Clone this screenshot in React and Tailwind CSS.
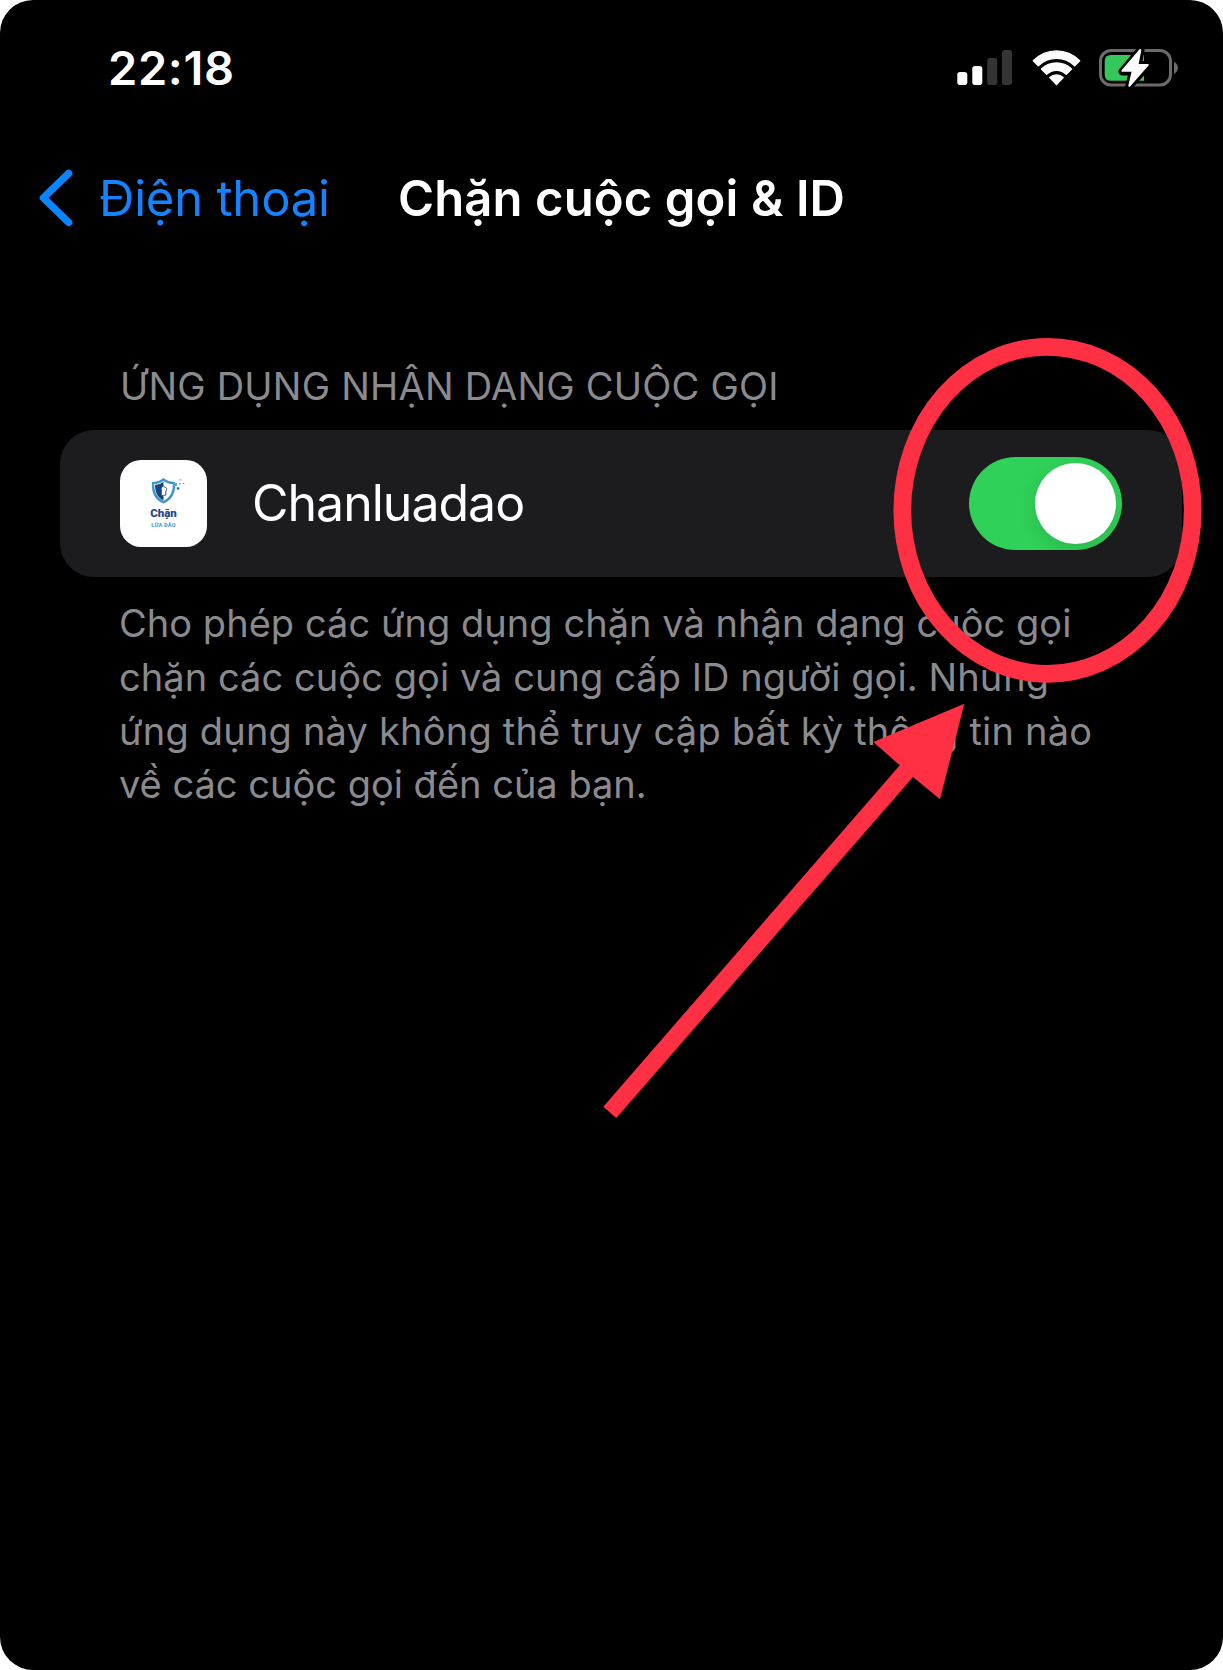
function SignalIcon() {
  return (
    <svg className="mr-[20px] h-[36px] w-[55px]" viewBox="0 0 55 36">
      <rect x="0.3" y="22" width="10" height="13" rx="2.8" fill="#fff" />
      <rect x="15.3" y="16" width="10" height="19" rx="2.8" fill="#fff" />
      <rect x="30.2" y="8" width="10" height="27" rx="2.8" fill="#343434" />
      <rect x="45" y="0" width="10" height="35" rx="2.8" fill="#343434" />
    </svg>
  );
}

function WifiIcon() {
  return (
    <svg className="mr-[18px] h-[37px] w-[49px]" viewBox="0 0 49 37">
      <g fill="#fff" stroke="#fff" strokeWidth="1.4" strokeLinejoin="round">
        <path d="M1.3 10.8C14.5 -2.4 34.5 -2.4 47.7 10.8L42.7 15.8C32.5 5.8 16.5 5.8 6.3 15.8Z" />
        <path d="M9.5 19.1C18 10.9 31 10.9 39.5 19.1L34.4 24.2C28.8 18.9 20.2 18.9 14.6 24.2Z" />
        <path d="M17.8 27.6C21.5 24.1 27.5 24.1 31.2 27.6L24.5 34.6Z" />
      </g>
    </svg>
  );
}

function BatteryIcon() {
  return (
    <svg className="h-[40px] w-[80px]" viewBox="0 0 80 40">
      <rect x="1.5" y="2.5" width="70" height="34.5" rx="10.5" fill="none" stroke="#6b6b6d" strokeWidth="3" />
      <path d="M75 13.7C80.2 16.2 80.2 23.5 75 26Z" fill="#6b6b6d" />
      <path d="M12 7H45V32.7H12Q5.7 32.7 5.7 26.4V13.3Q5.7 7 12 7Z" fill="#34c759" />
      <path
        d="M41.5 2L23.5 23.5H34L30.3 37.8L49 17H38.7Z"
        fill="#000"
        stroke="#000"
        strokeWidth="8"
        strokeLinejoin="round"
      />
      <path
        d="M41.3 2L23.3 22.8H33.8L30.3 37.8L48.8 16.9H38.5Z"
        fill="#fff"
        stroke="#fff"
        strokeWidth="2"
        strokeLinejoin="round"
      />
    </svg>
  );
}

function StatusBar() {
  return (
    <header className="flex h-[136px] items-center justify-between pl-[108px] pr-[44px]">
      <span className="text-[47px] font-semibold leading-[60px] tracking-[0.65px]">22:18</span>
      <div className="flex items-center">
        <SignalIcon />
        <WifiIcon />
        <BatteryIcon />
      </div>
    </header>
  );
}

function NavBar() {
  return (
    <nav className="flex h-[124px] items-center pl-[38px]">
      <svg className="h-[60px] w-[36px] shrink-0" viewBox="0 0 36 60">
        <path
          d="M30.6 5.3L5.4 29.8L30.6 54.3"
          fill="none"
          stroke="#0a84ff"
          strokeWidth="7.4"
          strokeLinecap="round"
          strokeLinejoin="round"
        />
      </svg>
      <a className="ml-[25px] w-[299px] pt-[2px] text-[49px] leading-[60px] tracking-[-0.2px] text-[#1583ff]">
        Điện thoại
      </a>
      <h1 className="pt-[2px] text-[49px] font-semibold leading-[60px] tracking-[0.1px]">Chặn cuộc gọi &amp; ID</h1>
    </nav>
  );
}

function AppIcon() {
  return (
    <div className="flex h-[87px] w-[87px] shrink-0 flex-col items-center rounded-[21px] bg-white pt-[18px]">
      <svg className="ml-[8px] h-[26px] w-[34px]" viewBox="0 0 34 26">
        <path
          d="M12.5 1.5C9.5 4 5.5 5 2 5.2C1.6 13.5 4 20.5 12.5 24.3C21 20.5 23.4 13.5 23 5.2C19.5 5 15.5 4 12.5 1.5Z"
          fill="#fff"
          stroke="#3d95cf"
          strokeWidth="2.3"
        />
        <path d="M12.5 3.8C10 5.8 7.2 6.6 4 7C4 14.4 6.3 19.3 12.5 22.4Z" fill="#17457f" />
        <circle cx="12.8" cy="11" r="2.3" fill="#fff" />
        <path d="M10.8 13H14.5V17.2H10.8Z" fill="#fff" />
        <path d="M13 8.9C16.4 9.2 16 12 14.8 13V17.2H12.5" fill="none" stroke="#17457f" strokeWidth="0.9" />
        <path d="M22.5 5H26V8H22.5Z" fill="#3bb0d8" />
        <path d="M25.8 9.3H28.3V11.6H25.8Z" fill="#355f88" />
        <path d="M28.5 1.3H30.5V2.6H28.5ZM28 5.2H30V6.6H28ZM31.6 5H33.4V6.2H31.6Z" fill="#86aebd" />
      </svg>
      <span className="mt-[3px] font-['Roboto'] text-[11.5px] font-black leading-[13px] text-[#1c4a80]">Chặn</span>
      <span className="mt-[1px] font-['Roboto'] text-[5.6px] font-black leading-[8px] tracking-[0.15px] text-[#45a9d2]">
        LỪA ĐẢO
      </span>
    </div>
  );
}

function Toggle() {
  return (
    <button
      type="button"
      role="switch"
      aria-checked="true"
      aria-label="Chanluadao"
      className="ml-auto flex h-[93px] w-[153px] items-center justify-end overflow-hidden rounded-full bg-[#30d158] pr-[6px]"
    >
      <span className="h-[81px] w-[81px] rounded-full bg-white shadow-[0_6px_18px_rgba(0,0,0,0.13)]" />
    </button>
  );
}

function Annotation() {
  return (
    <svg className="pointer-events-none absolute left-0 top-0 h-[1670px] w-[1223px]" viewBox="0 0 1223 1670">
      <ellipse cx="1047.5" cy="510.3" rx="145.2" ry="163.5" fill="none" stroke="#ff3044" strokeWidth="17.7" />
      <path d="M964.3 703.8L940 799.3L913 777L616.3 1118L603.3 1106.7L899.8 765.3L873.3 742Z" fill="#ff3044" />
    </svg>
  );
}

export default function App() {
  return (
    <div className="h-[1670px] w-[1223px] bg-white">
      <div className="relative h-full w-full overflow-hidden rounded-[33px] bg-black font-['Inter',sans-serif] text-white">
        <StatusBar />
        <NavBar />
        <main className="px-[60px] pt-[99px]">
          <h2 className="ml-[60px] text-[38px] leading-[54px] tracking-[0.22px] text-[#8a8a8f]">
            ỨNG DỤNG NHẬN DẠNG CUỘC GỌI
          </h2>
          <section className="mt-[17px] flex h-[147px] w-[1122px] items-center rounded-[34px] bg-[#1c1c1e] pl-[60px] pr-[60px]">
            <AppIcon />
            <span className="ml-[45px] pb-[2px] text-[50px] leading-[60px] tracking-[-1px]">Chanluadao</span>
            <Toggle />
          </section>
          <p className="ml-[59px] mt-[20px] whitespace-nowrap text-[38px] leading-[53.8px] text-[#8a8a8f]">
            <span className="block tracking-[0.04px]">Cho phép các ứng dụng chặn và nhận dạng cuộc gọi</span>
            <span className="block tracking-[0.06px]">chặn các cuộc gọi và cung cấp ID người gọi. Những</span>
            <span className="block tracking-[0.2px]">ứng dụng này không thể truy cập bất kỳ thông tin nào</span>
            <span className="block">về các cuộc gọi đến của bạn.</span>
          </p>
        </main>
        <Annotation />
      </div>
    </div>
  );
}
